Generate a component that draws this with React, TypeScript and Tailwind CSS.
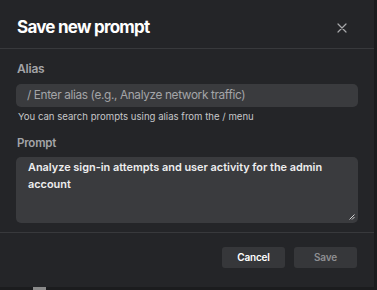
import React from 'react';

const App: React.FC = () => {
  return (
    <div className="w-[377px] h-[290px] bg-[#1b1c1e] font-['Inter',sans-serif] overflow-hidden">
      <div className="w-[375px] h-[287px] bg-[#242528] border-r border-[#1a1b1d] flex flex-col">
        <div className="h-[49px] flex items-center justify-between pl-[17px] pr-[27px] pt-[7px] border-b border-[#38393c]">
          <h1 className="text-[17px] font-bold text-white tracking-[-0.75px]">Save new prompt</h1>
          <svg width="10" height="10" viewBox="0 0 10 10" className="text-[#a8a9ab]">
            <path d="M1 1L9 9M9 1L1 9" stroke="currentColor" strokeWidth="1.2" strokeLinecap="round" />
          </svg>
        </div>

        <div className="px-[16px] pt-[13px] h-[184px] border-b border-[#38393c]">
          <label className="block pl-[1px] text-[12px] font-semibold text-[#a3a4a7] leading-[14px] tracking-[-0.2px]">Alias</label>
          <div className="mt-[8px] h-[23px] rounded-[5px] bg-[#3a3b3e] flex items-center pl-[11px]">
            <span className="text-[11.8px] text-[#a4a5a8] tracking-[-0.35px]">/ Enter alias (e.g., Analyze network traffic)</span>
          </div>
          <p className="mt-[3px] pl-[2px] text-[9.6px] text-[#c6c7c9] leading-[14px]">You can search prompts using alias from the / menu</p>

          <label className="block mt-[12px] pl-[1px] text-[11.5px] font-semibold text-[#a3a4a7] leading-[14px] tracking-[-0.2px]">Prompt</label>
          <div className="relative mt-[7px] h-[66px] rounded-[5px] bg-[#3a3b3e] pl-[12px] pr-[20px] pt-[2px]">
            <p className="text-[10.9px] font-semibold text-[#eeeeef] leading-[17px]">
              Analyze sign-in attempts and user activity for the admin account
            </p>
            <svg width="6" height="6" viewBox="0 0 6 6" className="absolute right-[3px] bottom-[3px] text-[#d0d0d0]">
              <path d="M5.5 0.5L0.5 5.5M5.5 3L3 5.5" stroke="currentColor" strokeWidth="1" />
            </svg>
          </div>
        </div>

        <div className="flex-1 flex justify-end items-start pt-[14px] pr-[17px] gap-[9px]">
          <button className="w-[63px] h-[21px] rounded-[3px] bg-[#36373a] text-[10px] font-semibold text-white tracking-[-0.2px]">Cancel</button>
          <button className="w-[63px] h-[21px] rounded-[3px] bg-[#36373a] text-[10px] font-semibold text-[#8e8f92] tracking-[-0.2px]">Save</button>
        </div>
      </div>
      <div className="h-[3px] relative">
        <div className="absolute left-[33px] top-0 w-[13px] h-[3px] bg-[#8a8a8a]" />
      </div>
    </div>
  );
};

export default App;
